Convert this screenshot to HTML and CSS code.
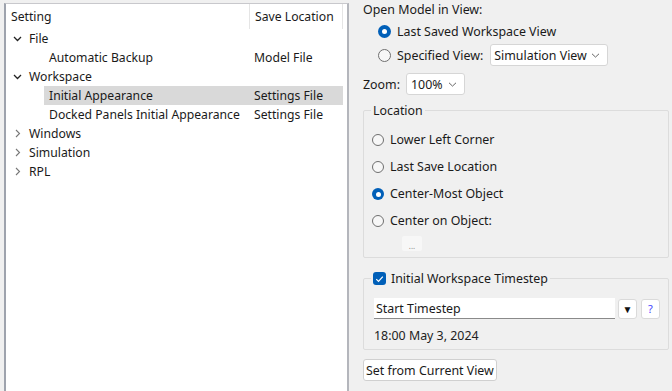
FILE: index.html
```html
<!DOCTYPE html>
<html>
<head>
<meta charset="utf-8">
<link rel="stylesheet" href="styles.css">
</head>
<body>
<div class="app">
  <div class="tree">
    <div class="tree-head">
      <div class="th th-name">Setting</div>
      <div class="th th-loc">Save Location</div>
    </div>
    <div class="row">
      <span class="tog"><svg width="9" height="6" viewBox="0 0 9 6"><path d="M1 1l3.5 3.5L8 1" fill="none" stroke="#222" stroke-width="1.3"/></svg></span>
      <span class="cat">File</span>
    </div>
    <div class="row child">
      <div class="item"><span class="name">Automatic Backup</span><span class="loc">Model File</span></div>
    </div>
    <div class="row">
      <span class="tog"><svg width="9" height="6" viewBox="0 0 9 6"><path d="M1 1l3.5 3.5L8 1" fill="none" stroke="#222" stroke-width="1.3"/></svg></span>
      <span class="cat">Workspace</span>
    </div>
    <div class="row child">
      <div class="item sel"><span class="name">Initial Appearance</span><span class="loc">Settings File</span></div>
    </div>
    <div class="row child">
      <div class="item"><span class="name">Docked Panels Initial Appearance</span><span class="loc">Settings File</span></div>
    </div>
    <div class="row">
      <span class="tog"><svg width="6" height="9" viewBox="0 0 6 9"><path d="M1 1l3.5 3.5L1 8" fill="none" stroke="#777" stroke-width="1.1"/></svg></span>
      <span class="cat">Windows</span>
    </div>
    <div class="row">
      <span class="tog"><svg width="6" height="9" viewBox="0 0 6 9"><path d="M1 1l3.5 3.5L1 8" fill="none" stroke="#777" stroke-width="1.1"/></svg></span>
      <span class="cat">Simulation</span>
    </div>
    <div class="row">
      <span class="tog"><svg width="6" height="9" viewBox="0 0 6 9"><path d="M1 1l3.5 3.5L1 8" fill="none" stroke="#777" stroke-width="1.1"/></svg></span>
      <span class="cat">RPL</span>
    </div>
  </div>

  <div class="panel">
    <div class="label-line">Open Model in View:</div>
    <div class="opt-line indent">
      <span class="radio on"></span><span>Last Saved Workspace View</span>
    </div>
    <div class="opt-line indent spec">
      <span class="radio"></span><span>Specified View:</span>
      <span class="select wide">Simulation View<svg class="dd" width="9" height="5" viewBox="0 0 9 5"><path d="M1 0.8l3.5 3.3L8 0.8" fill="none" stroke="#666" stroke-width="1"/></svg></span>
    </div>
    <div class="opt-line zoom">
      <span>Zoom:</span>
      <span class="select narrow">100%<svg class="dd" width="9" height="5" viewBox="0 0 9 5"><path d="M1 0.8l3.5 3.3L8 0.8" fill="none" stroke="#666" stroke-width="1"/></svg></span>
    </div>

    <fieldset class="group loc-group">
      <legend>Location</legend>
      <div class="loc-opt"><span class="radio"></span><span>Lower Left Corner</span></div>
      <div class="loc-opt"><span class="radio"></span><span>Last Save Location</span></div>
      <div class="loc-opt"><span class="radio on"></span><span>Center-Most Object</span></div>
      <div class="loc-opt"><span class="radio"></span><span>Center on Object:</span></div>
      <div class="dots-wrap"><span class="dots">...</span></div>
    </fieldset>

    <fieldset class="group ts-group">
      <legend><span class="check"><svg width="9" height="8" viewBox="0 0 9 8"><path d="M1.3 4.2l2.2 2.2L7.8 1.6" fill="none" stroke="#fff" stroke-width="1.2"/></svg></span>Initial Workspace Timestep</legend>
      <div class="ts-row">
        <span class="ts-input">Start Timestep</span>
        <span class="sq-btn">&#9660;</span>
        <span class="sq-btn q">?</span>
      </div>
      <div class="ts-date">18:00 May 3, 2024</div>
    </fieldset>

    <div class="btn-row"><span class="btn">Set from Current View</span></div>
  </div>
</div>
</body>
</html>
```

FILE: styles.css
```css
html, body {
  margin: 0;
  padding: 0;
  background: #f0f0f0;
  font-family: "Noto Sans", "Open Sans", sans-serif;
  font-size: 12.4px;
  color: #1a1a1a;
}
.app {
  display: flex;
  width: 672px;
  height: 391px;
  overflow: hidden;
}
.tree {
  margin: 3px 0 0 4px;
  width: 341px;
  height: 420px;
  background: #fff;
  border: 1px solid #c8c8cc;
  border-left: 2px solid #9ea3ad;
  border-right: 2px solid #b4b6bc;
  flex: none;
  font-size: 12.2px;
}
.tree-head {
  display: flex;
  height: 25px;
}
.th {
  display: flex;
  align-items: center;
  padding-left: 5px;
  box-sizing: border-box;
}
.th-name {
  width: 244px;
  border-right: 1px solid #e5e5e5;
}
.th-loc {
  width: 93px;
  border-right: 1px solid #e5e5e5;
}
.row {
  display: flex;
  align-items: center;
  height: 19px;
}
.tog {
  width: 23px;
  display: flex;
  justify-content: center;
  align-items: center;
}
.row.child {
  padding-left: 38px;
}
.item {
  display: flex;
  align-items: center;
  height: 19px;
  width: 299px;
  padding-left: 5px;
  box-sizing: border-box;
}
.item.sel {
  background: #d9d9d9;
}
.name {
  width: 205px;
  white-space: nowrap;
}
.loc {
  white-space: nowrap;
}
.panel {
  flex: 1;
  padding-left: 14px;
  padding-right: 4px;
}
.label-line {
  height: 19px;
  display: flex;
  align-items: center;
}
.opt-line {
  display: flex;
  align-items: center;
  gap: 6px;
  height: 24px;
}
.indent {
  margin-left: 15px;
}
.spec .select {
  margin-left: 1px;
}
.zoom {
  margin-top: 5px;
  gap: 6px;
}
.radio {
  width: 13px;
  height: 13px;
  border-radius: 50%;
  border: 1px solid #6f6f6f;
  box-sizing: border-box;
  background: #f7f7f7;
  flex: none;
  position: relative;
}
.radio.on {
  border: none;
  background: #005fb8;
}
.radio.on::after {
  content: "";
  position: absolute;
  left: 4px;
  top: 4px;
  width: 5px;
  height: 5px;
  border-radius: 50%;
  background: #fff;
}
.select {
  display: flex;
  align-items: center;
  justify-content: space-between;
  background: #fff;
  border: 1px solid #d6d6d6;
  border-radius: 3px;
  height: 22px;
  box-sizing: border-box;
  padding: 0 7px 0 3px;
}
.select.wide {
  width: 118px;
}
.select.narrow {
  width: 59px;
  padding-left: 4px;
}
.group {
  margin: 0;
  border: 1px solid #dcdcdc;
  border-radius: 2px;
  padding: 0 0 0 8px;
  width: 306px;
  box-sizing: border-box;
}
.group legend {
  padding: 0 2px;
  margin-left: -1px;
}
.loc-group {
  margin-top: 6px;
  height: 156px;
}
.loc-opt {
  display: flex;
  align-items: center;
  gap: 6px;
  height: 27px;
}
.loc-opt .radio {
  width: 12px;
  height: 12px;
}
.loc-opt:first-of-type {
  margin-top: 7px;
}
.dots-wrap {
  padding-left: 30px;
  padding-top: 2px;
}
.dots {
  display: inline-flex;
  align-items: flex-end;
  justify-content: center;
  width: 20px;
  height: 15px;
  background: #f7f7f7;
  border-radius: 2px;
  font-size: 8px;
  color: #888;
  line-height: 10px;
}
.ts-group {
  margin-top: 12px;
  height: 80px;
  padding-left: 10px;
}
.ts-group legend {
  display: flex;
  align-items: center;
  gap: 5px;
  margin-left: -3px;
}
.check {
  width: 13px;
  height: 13px;
  background: #005fb8;
  border-radius: 3px;
  display: flex;
  align-items: center;
  justify-content: center;
}
.ts-row {
  display: flex;
  align-items: center;
  margin-top: 11px;
  gap: 3px;
}
.ts-input {
  width: 241px;
  height: 21px;
  background: #fff;
  border-bottom: 1px solid #8a8a8a;
  box-sizing: border-box;
  display: flex;
  align-items: center;
  padding-left: 2px;
}
.sq-btn {
  width: 19px;
  height: 20px;
  background: #fff;
  border: 1px solid #dadada;
  border-radius: 3px;
  box-sizing: border-box;
  display: flex;
  align-items: center;
  justify-content: center;
  font-size: 10px;
  color: #111;
}
.sq-btn.q {
  color: #4545ff;
  font-size: 11px;
  margin-left: 1px;
}
.ts-date {
  margin-top: 7px;
  height: 18px;
  display: flex;
  align-items: center;
  color: #222;
}
.btn-row {
  margin-top: 9px;
}
.btn {
  display: inline-flex;
  align-items: center;
  height: 22px;
  padding: 0 2px;
  background: #fff;
  border: 1px solid #d0d0d0;
  border-radius: 3px;
  box-sizing: border-box;
}
```
